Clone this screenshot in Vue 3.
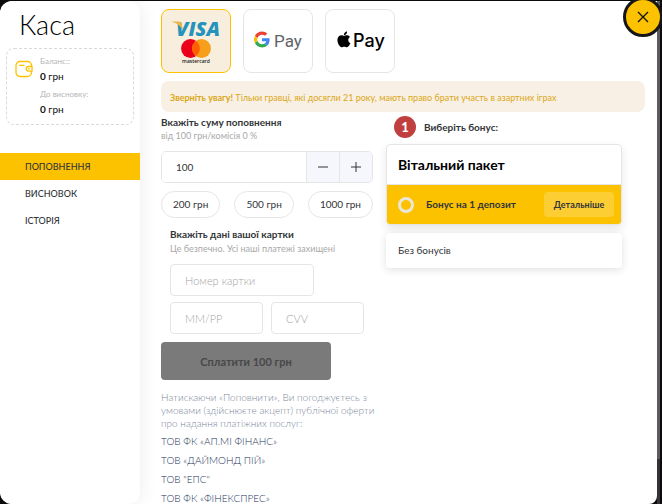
<script setup>
import { ref } from 'vue'

const method = ref('card')
const amount = ref(100)
const bonus = ref('deposit')
const presets = [200, 500, 1000]
const menu = ['ПОПОВНЕННЯ', 'ВИСНОВОК', 'ІСТОРІЯ']
const companies = ['ТОВ ФК «АП.МІ ФІНАНС»', 'ТОВ «ДАЙМОНД ПІЙ»', 'ТОВ "ЕПС"', 'ТОВ ФК «ФІНЕКСПРЕС»']
</script>

<template>
  <div class="backdrop">
    <div class="modal">
      <aside class="side">
        <h1 class="title">Каса</h1>
        <div class="balance">
          <svg class="wallet" viewBox="0 0 18 18" fill="none" stroke="#fcc200" stroke-width="1.3" stroke-linecap="round">
            <rect x="1" y="1.5" width="15.5" height="15" rx="4" />
            <path d="M4.5 5.3h4.500" />
            <path d="M17 6.500h-3.500a2.300 2.300 0 0 0 0 4.600H17z" fill="#fff" />
            <path d="M13.500 8.800h1" />
          </svg>
          <dl class="sums">
            <dt>Баланс::</dt>
            <dd><b>0</b> грн</dd>
            <dt>До висновку:</dt>
            <dd><b>0</b> грн</dd>
          </dl>
        </div>
        <nav class="menu">
          <a v-for="(item, i) in menu" :key="item" href="#" :class="{ active: i === 0 }">{{ item }}</a>
        </nav>
      </aside>

      <main class="content">
        <div class="methods">
          <button type="button" class="method" :class="{ chosen: method === 'card' }" aria-label="Visa, Mastercard" @click="method = 'card'">
            <svg viewBox="0 0 68 62">
              <text x="36" y="26" class="visa" text-anchor="middle">VISA</text>
              <path d="M10.500 11.500h6.500q2 0 2.600 2.200l1.600 7q-3.700-7-10.700-8.700z" fill="#f0b545" />
              <circle cx="28.500" cy="38.500" r="9.400" fill="#eb001b" />
              <circle cx="39.500" cy="38.500" r="9.400" fill="#f79e1b" />
              <path d="M34 30.900a9.400 9.400 0 0 1 0 15.200a9.400 9.400 0 0 1 0-15.200z" fill="#ff5f00" />
              <text x="34" y="53" class="mc" text-anchor="middle">mastercard</text>
            </svg>
          </button>
          <button type="button" class="method" :class="{ chosen: method === 'google' }" aria-label="Google Pay" @click="method = 'google'">
            <svg viewBox="0 0 68 62">
              <g transform="translate(10 21.500) scale(.333)">
                <path fill="#ea4335" d="M24 9.500c3.540 0 6.710 1.220 9.210 3.600l6.850-6.850C35.900 2.380 30.470 0 24 0 14.620 0 6.510 5.380 2.560 13.220l7.980 6.190C12.430 13.720 17.740 9.500 24 9.500z" />
                <path fill="#4285f4" d="M46.980 24.550c0-1.570-.15-3.090-.38-4.550H24v9.020h12.940c-.58 2.960-2.260 5.480-4.780 7.180l7.730 6c4.510-4.180 7.090-10.360 7.090-17.650z" />
                <path fill="#fbbc05" d="M10.530 28.590c-.48-1.450-.76-2.990-.76-4.590s.27-3.140.76-4.590l-7.980-6.190C.92 16.460 0 20.120 0 24c0 3.880.92 7.540 2.560 10.780l7.970-6.190z" />
                <path fill="#34a853" d="M24 48c6.480 0 11.930-2.130 15.890-5.810l-7.730-6c-2.150 1.450-4.920 2.300-8.160 2.300-6.260 0-11.570-4.220-13.470-9.910l-7.980 6.190C6.510 42.620 14.620 48 24 48z" />
              </g>
              <text x="30" y="37" class="gpay">Pay</text>
            </svg>
          </button>
          <button type="button" class="method" :class="{ chosen: method === 'apple' }" aria-label="Apple Pay" @click="method = 'apple'">
            <svg viewBox="0 0 68 62">
              <path transform="translate(10 21.500) scale(.66)" d="M12.152 6.896c-.948 0-2.415-1.078-3.960-1.040-2.040.027-3.910 1.183-4.961 3.014-2.117 3.675-.546 9.103 1.519 12.090 1.013 1.454 2.208 3.090 3.792 3.039 1.520-.065 2.090-.987 3.935-.987 1.831 0 2.350.987 3.960.948 1.637-.026 2.676-1.480 3.676-2.948 1.156-1.688 1.636-3.325 1.662-3.415-.039-.013-3.182-1.221-3.220-4.857-.026-3.040 2.480-4.494 2.597-4.559-1.429-2.090-3.623-2.324-4.390-2.376-2-.156-3.675 1.090-4.610 1.090zM15.530 3.830c.843-1.012 1.400-2.427 1.245-3.830-1.207.052-2.662.805-3.532 1.818-.780.896-1.454 2.338-1.273 3.714 1.338.104 2.715-.688 3.559-1.701" />
              <text x="27" y="37" class="apay">Pay</text>
            </svg>
          </button>
        </div>

        <p class="warning"><b>Зверніть увагу!</b> Тільки гравці, які досягли 21 року, мають право брати участь в азартних іграх</p>

        <div class="columns">
          <form class="pay" @submit.prevent>
            <label class="heading" for="amount">Вкажіть суму поповнення</label>
            <p class="hint">від 100 грн/комісія 0 %</p>
            <div class="stepper">
              <input id="amount" v-model.number="amount" type="text" inputmode="numeric" />
              <button type="button" aria-label="Менше" @click="amount = Math.max(100, amount - 100)">
                <svg viewBox="0 0 12 12"><path d="M1 6h10" /></svg>
              </button>
              <button type="button" aria-label="Більше" @click="amount += 100">
                <svg viewBox="0 0 12 12"><path d="M1 6h10M6 1v10" /></svg>
              </button>
            </div>
            <div class="presets">
              <button v-for="p in presets" :key="p" type="button" @click="amount = p">{{ p }} грн</button>
            </div>
            <fieldset class="card-data">
              <legend class="heading">Вкажіть дані вашої картки</legend>
              <p class="hint">Це безпечно. Усі наші платежі захищені</p>
              <input class="number" type="text" placeholder="Номер картки" aria-label="Номер картки" />
              <div class="pair">
                <input type="text" placeholder="ММ/РР" aria-label="ММ/РР" />
                <input type="text" placeholder="CVV" aria-label="CVV" />
              </div>
            </fieldset>
            <button class="submit" type="submit" disabled>Сплатити {{ amount }} грн</button>
            <p class="terms">Натискаючи «Поповнити», Ви погоджуєтесь з умовами (здійснюєте акцепт) публічної оферти про надання платіжних послуг:</p>
            <ul class="companies">
              <li v-for="c in companies" :key="c"><a href="#">{{ c }}</a></li>
            </ul>
          </form>

          <section class="bonuses">
            <div class="step"><span class="badge">1</span><span>Виберіть бонус:</span></div>
            <div class="package">
              <h2>Вітальний пакет</h2>
              <div class="offer">
                <input id="deposit" v-model="bonus" type="radio" value="deposit" />
                <label for="deposit">Бонус на 1 депозит</label>
                <button type="button">Детальніше</button>
              </div>
            </div>
            <button type="button" class="none" @click="bonus = 'none'">Без бонусів</button>
          </section>
        </div>
      </main>
    </div>
    <div class="scroll"><div class="thumb"></div></div>
    <button type="button" class="close" aria-label="Закрити">
      <svg viewBox="0 0 12 12"><path d="M1 1l10 10M11 1L1 11" /></svg>
    </button>
  </div>
</template>

<style>
body {
  background: #000;
}
</style>

<style scoped>
* {
  box-sizing: border-box;
}
.backdrop {
  position: relative;
  display: flex;
  height: 100vh;
  padding: 1px 2px 0 0;
  overflow: hidden;
  background: #0c0a0d;
  font-family: Lato, "Open Sans", sans-serif;
  font-size: 10px;
  line-height: 13px;
  color: #333539;
}
h1, h2, p, dl, dd, ul {
  margin: 0;
  padding: 0;
}
button, input {
  margin: 0;
  font: inherit;
  color: inherit;
}
a {
  color: inherit;
  text-decoration: none;
}
.modal {
  flex: 1;
  display: flex;
  min-width: 0;
  background: #fff;
  border-radius: 12px 0 8px 12px;
  overflow: hidden;
}
.side {
  flex: 0 0 140px;
  background: #fff;
  border-radius: 12px;
  box-shadow: 0 0 20px rgba(0, 0, 0, 0.08);
}
.title {
  padding: 9px 19px 8px;
  font-size: 27px;
  line-height: 30px;
  font-weight: 300;
  color: #000;
}
.balance {
  display: flex;
  gap: 7px;
  margin: 0 6px;
  padding: 6px 8px;
  border: 1px dashed #d9d9d9;
  border-radius: 8px;
}
.wallet {
  width: 18px;
  height: 18px;
  margin-top: 5px;
}
.sums dt {
  font-size: 8px;
  line-height: 12px;
  color: #b5b5b5;
}
.sums dd {
  line-height: 18px;
  margin-bottom: 3px;
  color: #111;
}
.sums dd:last-child {
  margin-bottom: 0;
}
.menu {
  display: flex;
  flex-direction: column;
  margin-top: 28px;
}
.menu a {
  padding: 0 25px;
  line-height: 27px;
  font-size: 9px;
  font-weight: 500;
}
.menu .active {
  background: #fcc200;
}
.content {
  flex: 1;
  min-width: 0;
  padding: 8px 12px 0 21px;
}
.methods {
  display: flex;
  gap: 12px;
}
.method {
  width: 70px;
  height: 64px;
  padding: 0;
  border: 1px solid #e5e5e5;
  border-radius: 8px;
  background: #fff;
}
.method svg {
  display: block;
  width: 100%;
  height: 100%;
}
.method.chosen {
  border-color: #fcc200;
  background: #f7eedd;
}
.visa {
  font: italic 800 20px "Open Sans", sans-serif;
  fill: #2493bd;
}
.mc {
  font: 600 5px "Open Sans", sans-serif;
  fill: #222;
}
.gpay {
  font: 400 17px Roboto, sans-serif;
  fill: #5f6368;
}
.apay {
  font: 500 18px Inter, sans-serif;
  fill: #000;
}
.warning {
  margin-top: 8px;
  padding: 10px 9px 8px;
  border-radius: 8px;
  background: #f8f0e4;
  font-size: 9px;
  color: #dba716;
}
.columns {
  display: flex;
  gap: 13px;
}
.pay {
  flex: 0 0 212px;
  min-width: 0;
  padding-top: 3px;
}
.heading {
  display: block;
  padding: 0;
  font-weight: 700;
  line-height: 14px;
}
.hint {
  font-size: 9px;
  line-height: 14px;
  color: #a9a9a9;
}
.stepper {
  display: flex;
  height: 32px;
  margin-top: 8px;
  border: 1px solid #e5e5e5;
  border-radius: 5px;
  overflow: hidden;
}
.stepper input {
  flex: 1;
  min-width: 0;
  padding: 0 14px;
  border: 0;
}
.stepper button {
  flex: 0 0 33px;
  padding: 0 10px;
  border: 0;
  border-left: 1px solid #e5e5e5;
  background: #f6f7fc;
}
.stepper svg, .close svg {
  display: block;
  width: 12px;
  height: 12px;
  stroke: #333;
}
.presets {
  display: flex;
  justify-content: space-between;
  margin-top: 8px;
}
.presets button {
  height: 27px;
  padding: 0 11px;
  border: 1px solid #e5e5e5;
  border-radius: 14px;
  background: #fff;
}
.card-data {
  min-width: 0;
  margin: 9px 9px 0;
  padding: 0;
  border: 0;
}
.card-data .hint {
  margin-top: 1px;
}
.card-data input {
  width: 100%;
  min-width: 0;
  height: 32px;
  padding: 0 14px;
  border: 1px solid #e5e5e5;
  border-radius: 4px;
  background: #fff;
  font-size: 11px;
  font-weight: 300;
}
.card-data input::placeholder {
  color: #a4a4a4;
  opacity: 1;
}
.card-data .number {
  display: block;
  width: 144px;
  margin-top: 8px;
}
.pair {
  display: flex;
  gap: 8px;
  margin-top: 6px;
}
.submit {
  display: block;
  width: 170px;
  height: 38px;
  margin-top: 8px;
  border: 0;
  border-radius: 4px;
  background: #7a7a7a;
  color: #484848;
  font-size: 11px;
  font-weight: 700;
}
.terms {
  margin: 11px -8px 0 0;
  font-weight: 300;
  color: #7d879b;
}
.companies {
  list-style: none;
  margin-top: 2px;
}
.companies li {
  line-height: 19px;
  font-weight: 300;
  color: #24365a;
}
.bonuses {
  flex: 0 1 236px;
  padding-top: 4px;
}
.step {
  display: flex;
  align-items: center;
  gap: 8px;
  padding-left: 8px;
  font-weight: 700;
}
.badge {
  display: grid;
  place-items: center;
  width: 22px;
  height: 22px;
  border-radius: 50%;
  background: #c04040;
  color: #fff;
  font-size: 13px;
  font-weight: 900;
}
.package {
  margin-top: 6px;
  border: 1px solid #e5e5e5;
  border-radius: 4px;
  overflow: hidden;
  box-shadow: 0 4px 10px rgba(0, 0, 0, 0.1);
}
.package h2 {
  padding: 0 11px;
  line-height: 39px;
  font-size: 14px;
  font-weight: 700;
  color: #000;
}
.offer {
  display: flex;
  align-items: center;
  height: 40px;
  padding: 0 7px 0 11px;
  border-top: 1px solid #e5e5e5;
  background: #fcc200;
  font-weight: 700;
}
.offer input {
  appearance: none;
  width: 16px;
  height: 16px;
  border: 3px solid #ece6d8;
  border-radius: 50%;
}
.offer label {
  flex: 1;
  padding-left: 12px;
}
.offer button {
  width: 70px;
  height: 25px;
  padding: 0;
  border: 0;
  border-radius: 4px;
  background: #fdce33;
  font-size: 9px;
}
.none {
  display: block;
  width: 100%;
  height: 35px;
  margin-top: 8px;
  padding: 0 12px;
  border: 0;
  border-radius: 4px;
  background: #fff;
  box-shadow: 0 2px 9px rgba(0, 0, 0, 0.12);
  text-align: left;
}
.scroll {
  flex: 0 0 3px;
  background: #333;
}
.thumb {
  height: 91%;
  background: #5c5c5c;
}
.close {
  position: absolute;
  top: -3px;
  right: -1px;
  display: grid;
  place-items: center;
  width: 40px;
  height: 40px;
  padding: 0;
  border: 3px solid #161616;
  border-radius: 50%;
  background: #fcc200;
}
.close svg {
  stroke: #111;
  stroke-width: 1.3;
}
</style>
